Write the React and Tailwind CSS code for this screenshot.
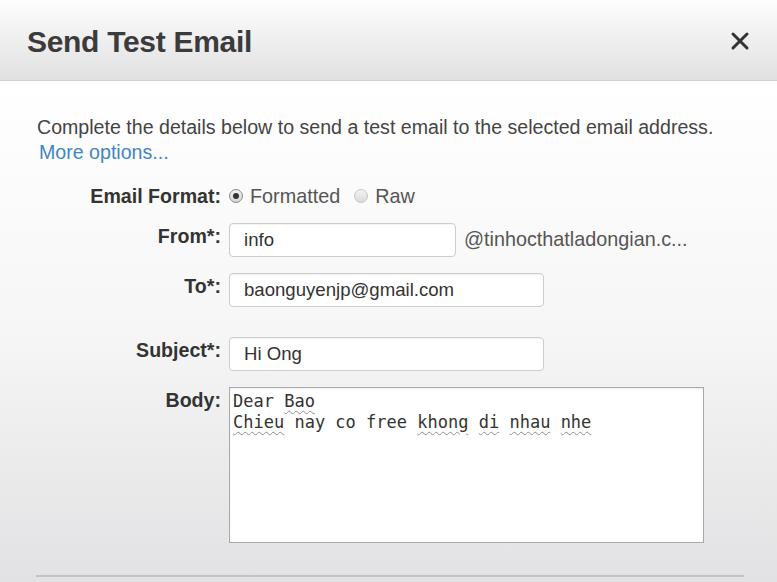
import React from 'react';

const sans = { fontFamily: '"Liberation Sans", Arial, sans-serif' };

const Squiggle = ({ children }) => (
  <span className="underline decoration-wavy decoration-[#8f8f8f] decoration-1 underline-offset-[3px]">{children}</span>
);

const Radio = ({ checked }) => (
  <span className={'inline-flex items-center justify-center w-[14px] h-[14px] rounded-full border ' + (checked ? 'border-[#8a8a8a] bg-gradient-to-b from-[#f2f2f2] to-[#d6d6d6]' : 'border-[#c6c6c6] bg-gradient-to-b from-[#f4f4f4] to-[#dadada]')}>
    {checked && <span className="w-[6px] h-[6px] rounded-full bg-[#333]" />}
  </span>
);

const Row = ({ label, children, className = '' }) => (
  <div className={'flex items-start ' + className}>
    <div className="w-[221px] shrink-0 text-right font-bold text-[19.6px] leading-[26px] text-[#333]">{label}</div>
    <div className="ml-[8px] flex items-center">{children}</div>
  </div>
);

const inputCls = 'h-[34px] rounded-[4px] border border-[#cdcdcd] bg-white pl-[14px] text-[18.6px] text-[#333] outline-none shadow-[inset_0_1px_1px_rgba(0,0,0,0.05)]';

export default function App() {
  return (
    <div className="w-[777px] h-[582px] overflow-hidden flex flex-col" style={sans}>
      <div className="h-[81px] shrink-0 flex items-center justify-between pl-[27px] pr-[27px] bg-gradient-to-b from-[#fdfdfd] to-[#e1e1e1] border-b border-[#d2d2d2]">
        <h1 className="text-[30px] font-bold text-[#3b3b3b] tracking-[-0.3px] mt-[2px]">Send Test Email</h1>
        <svg width="20" height="20" viewBox="0 0 20 20" className="mt-[2px]">
          <path d="M3 3 L17 17 M17 3 L3 17" stroke="#333" strokeWidth="3" strokeLinecap="round" />
        </svg>
      </div>

      <div className="flex-1 bg-gradient-to-b from-white via-[#f6f6f6] to-[#e2e1e3] pt-[34px]">
        <div className="pl-[37px] text-[19.6px] leading-[25px] text-[#444]">
          <p>Complete the details below to send a test email to the selected email address.</p>
          <a className="ml-[2px] text-[#3f86c4]">More options...</a>
        </div>

        <Row label="Email Format:" className="mt-[18px]">
          <div className="flex items-center text-[19.8px] leading-[26px] text-[#555]">
            <Radio checked />
            <span className="ml-[7px]">Formatted</span>
            <span className="ml-[14px]"><Radio /></span>
            <span className="ml-[7px]">Raw</span>
          </div>
        </Row>

        <Row label="From*:" className="mt-[14px]">
          <input className={inputCls + ' w-[227px]'} defaultValue="info" />
          <span className="ml-[8px] text-[19.8px] text-[#555]">@tinhocthatladongian.c...</span>
        </Row>

        <Row label="To*:" className="mt-[16px]">
          <input className={inputCls + ' w-[315px]'} defaultValue="baonguyenjp@gmail.com" />
        </Row>

        <Row label="Subject*:" className="mt-[30px]">
          <input className={inputCls + ' w-[315px]'} defaultValue="Hi Ong" />
        </Row>

        <Row label="Body:" className="mt-[16px]">
          <div className="w-[475px] h-[156px] border border-[#a9a9a9] bg-white pl-[3px] pt-[3px] text-[17px] leading-[21px] text-[#333] shadow-[inset_0_1px_2px_rgba(0,0,0,0.08)]" style={{ fontFamily: '"DejaVu Sans Mono", "Liberation Mono", monospace' }}>
            <div>Dear <Squiggle>Bao</Squiggle></div>
            <div><Squiggle>Chieu</Squiggle> nay co free <Squiggle>khong</Squiggle> <Squiggle>di</Squiggle> <Squiggle>nhau</Squiggle> <Squiggle>nhe</Squiggle></div>
          </div>
        </Row>

        <div className="mt-[32px] ml-[36px] w-[708px] h-[2px] bg-[#c3c3c3]" />
      </div>
    </div>
  );
}
